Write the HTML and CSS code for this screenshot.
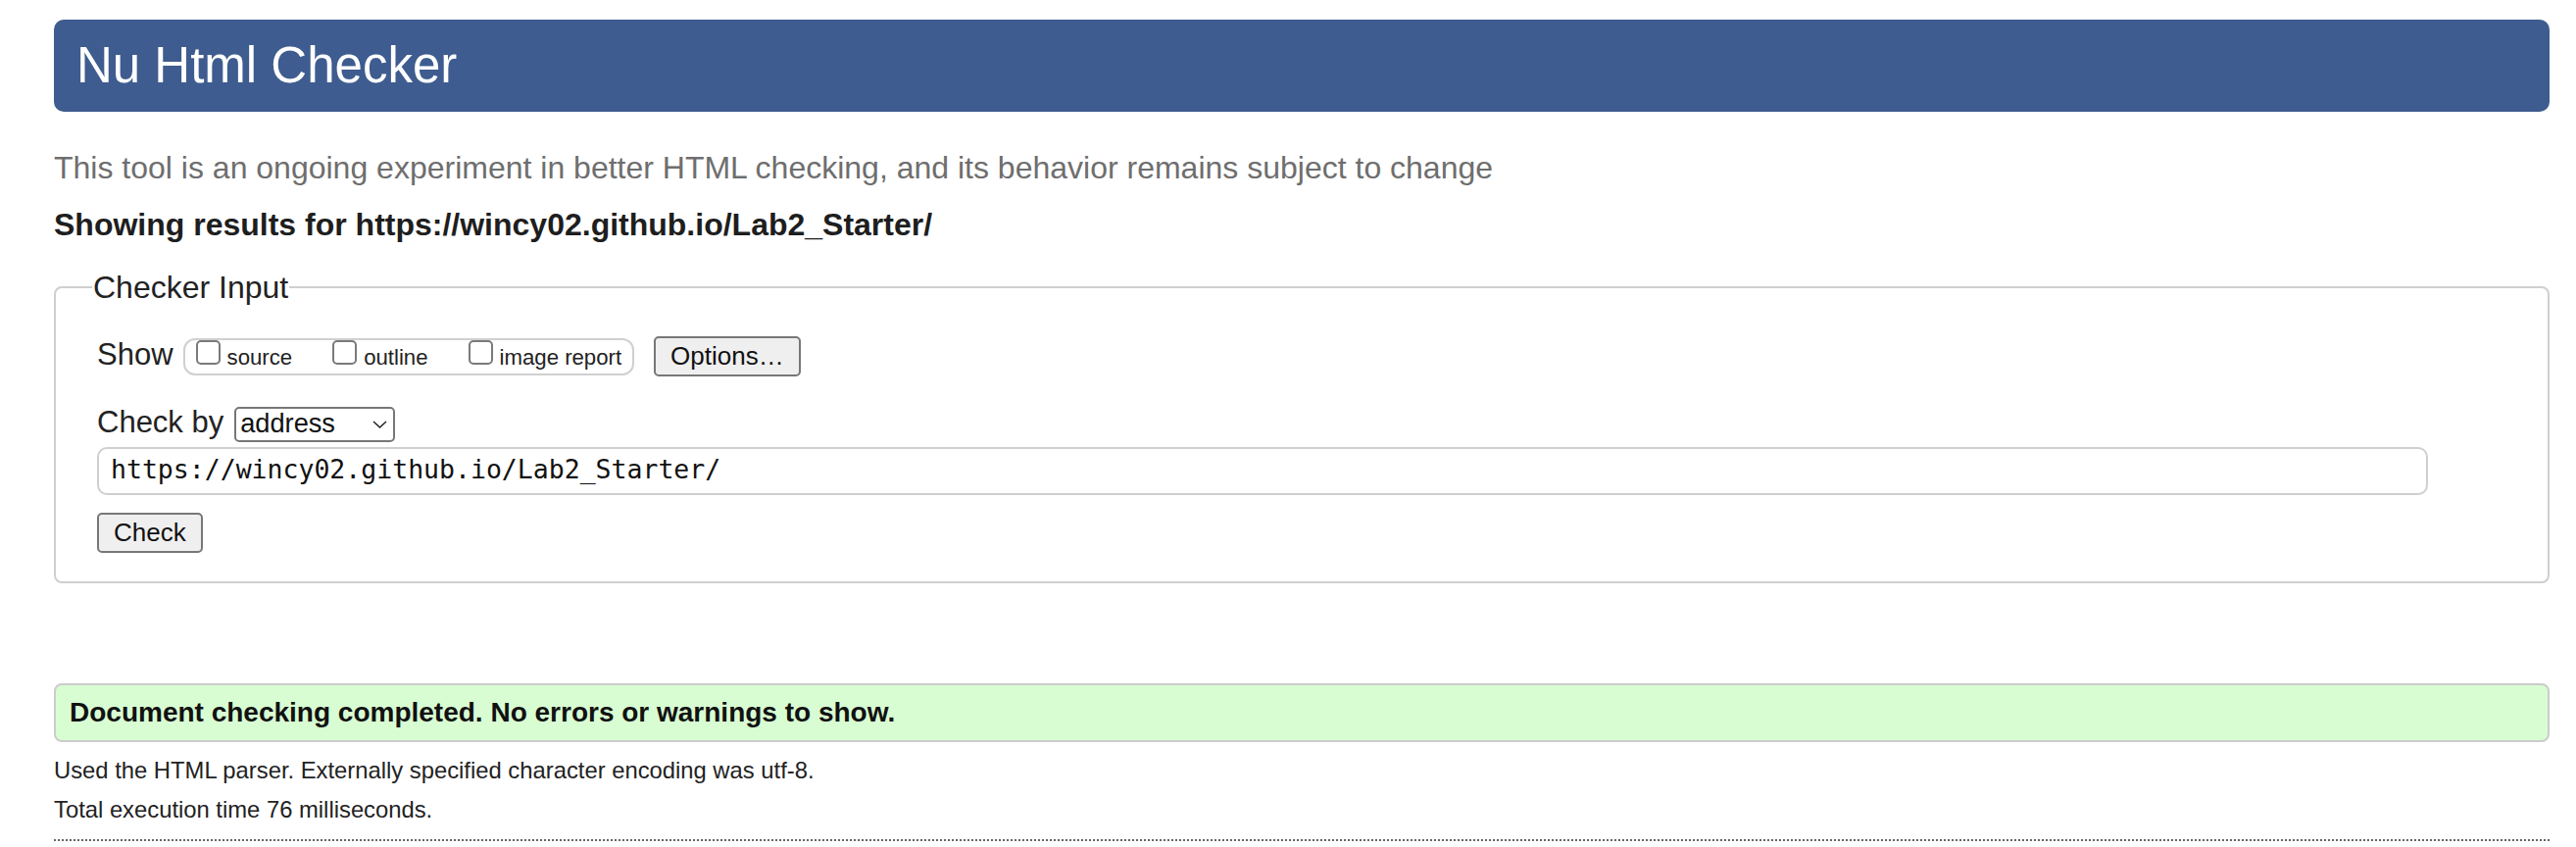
FILE: index.html
```html
<!DOCTYPE html>
<html lang="en">
<head>
<meta charset="utf-8">
<title>Showing results for https://wincy02.github.io/Lab2_Starter/ - Nu Html Checker</title>
<link rel="stylesheet" href="styles.css">
</head>
<body>
<h1 class="title">Nu Html Checker</h1>
<p class="subtitle">This tool is an ongoing experiment in better HTML checking, and its behavior remains subject to change</p>
<p class="showing">Showing results for https://wincy02.github.io/Lab2_Starter/</p>
<form class="checker">
  <fieldset class="checker-fs">
    <legend class="checker-legend">Checker Input</legend>
    <div class="fs-body">
      <div class="row row-show">
        <span class="label">Show</span>
        <span class="opts">
          <label class="opt"><input type="checkbox" class="cb"><span class="opt-text">source</span></label>
          <label class="opt"><input type="checkbox" class="cb"><span class="opt-text">outline</span></label>
          <label class="opt"><input type="checkbox" class="cb"><span class="opt-text">image report</span></label>
        </span>
        <button type="button" class="btn btn-options">Options…</button>
      </div>
      <div class="row row-by">
        <span class="label">Check by</span>
        <span class="select"><span class="select-text">address</span><svg class="chev" width="15" height="8" viewBox="0 0 15 8"><path d="M1 1 L7.5 7 L14 1" fill="none" stroke="#222" stroke-width="1.5"/></svg></span>
      </div>
      <input class="url" type="text" value="https://wincy02.github.io/Lab2_Starter/">
      <button type="button" class="btn btn-check">Check</button>
    </div>
  </fieldset>
</form>
<p class="success">Document checking completed. No errors or warnings to show.</p>
<p class="meta">Used the HTML parser. Externally specified character encoding was utf-8.</p>
<p class="meta">Total execution time 76 milliseconds.</p>
<hr class="dots">
</body>
</html>
```

FILE: styles.css
```css
html, body {
  background: #fff;
}
body {
  margin: 0;
  padding: 20px 27px 0 55px;
  font-family: "Liberation Sans", Arial, Helvetica, sans-serif;
  color: #222;
}
.title {
  margin: 0;
  height: 94px;
  padding: 0 0 0 23px;
  background: #3e5c8f;
  color: #fff;
  border-radius: 10px;
  font-size: 51px;
  font-weight: normal;
  line-height: 94px;
}
.subtitle {
  margin: 37px 0 0 0;
  font-size: 32px;
  line-height: 40px;
  color: #6e6e6e;
}
.showing {
  margin: 18px 0 0 0;
  font-size: 32px;
  line-height: 40px;
  font-weight: bold;
  color: #1e1e1e;
}
.checker {
  margin: 0;
}
.checker-fs {
  margin: 27px 0 0 0;
  padding: 33px 0 29px 42px;
  border: 2px solid #cfcfcf;
  border-radius: 8px;
  min-width: 0;
}
.checker-legend {
  font-size: 32px;
  line-height: 34px;
  padding: 0 1px;
  margin-left: -5px;
  color: #222;
}
.fs-body {
  display: flex;
  flex-direction: column;
  align-items: flex-start;
}
.row {
  display: flex;
  align-items: baseline;
}
.label {
  font-size: 31px;
  line-height: 1;
  color: #222;
}
.row-show .label {
  margin-right: 10px;
}
.opts {
  display: flex;
  align-items: baseline;
  gap: 41px;
  height: 38px;
  box-sizing: border-box;
  padding: 0 11px;
  border: 2px solid #d0d0d0;
  border-radius: 12px;
}
.opt {
  display: flex;
  align-items: baseline;
  gap: 7px;
}
.cb {
  appearance: none;
  -webkit-appearance: none;
  margin: 0;
  width: 25px;
  height: 25px;
  box-sizing: border-box;
  border: 2px solid #7a7a7a;
  border-radius: 5px;
  background: #fff;
}
.opt-text {
  font-size: 22.2px;
  line-height: 25px;
  color: #222;
}
.btn {
  font-family: "Liberation Sans", Arial, sans-serif;
  font-size: 26px;
  height: 41px;
  box-sizing: border-box;
  padding: 0 15px;
  border: 2px solid #777;
  border-radius: 5px;
  background: #efefef;
  color: #111;
}
.btn-options {
  margin-left: 20px;
}
.row-by {
  margin-top: 31px;
}
.row-by .label {
  margin-right: 11px;
}
.select {
  display: flex;
  align-items: center;
  justify-content: space-between;
  width: 164px;
  height: 36px;
  box-sizing: border-box;
  padding: 0 4px 2px 4px;
  border: 2px solid #777;
  border-radius: 5px;
  background: #fff;
}
.select-text {
  font-size: 27.2px;
  line-height: 30px;
  color: #111;
}
.chev {
  display: block;
  margin-top: 2px;
  margin-right: 2px;
}
.url {
  margin: 5px 0 0 0;
  width: 2378px;
  height: 49px;
  box-sizing: border-box;
  padding: 0 12px 5px 12px;
  border: 2px solid #cfcfcf;
  border-radius: 10px;
  font-family: "DejaVu Sans Mono", "Liberation Mono", monospace;
  font-size: 26.5px;
  line-height: 40px;
  color: #111;
  background: #fff;
  outline: none;
}
.btn-check {
  margin-top: 18px;
}
.success {
  margin: 102px 0 0 0;
  height: 60px;
  box-sizing: border-box;
  padding: 0 0 0 14px;
  border: 2px solid #cccccc;
  border-radius: 8px;
  background: #d8fdd2;
  font-size: 28px;
  font-weight: bold;
  line-height: 56px;
  color: #111;
}
.meta {
  margin: 9px 0 0 0;
  font-size: 23.8px;
  line-height: 40px;
  color: #222;
}
.meta + .meta {
  margin-top: 0;
}
.dots {
  margin: 10px 0 0 0;
  height: 0;
  border: 0;
  border-top: 2px dotted #666;
}
```
